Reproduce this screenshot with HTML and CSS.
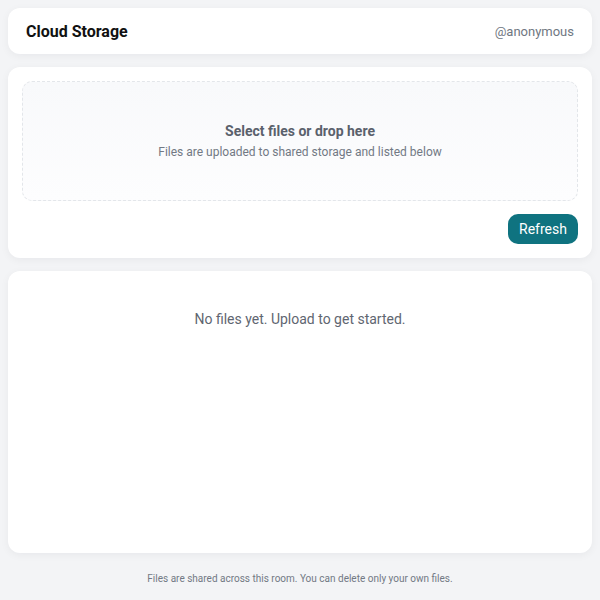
FILE: index.html
```html
<!DOCTYPE html>
<html lang="en">
<head>
  <meta charset="UTF-8" />
  <meta name="viewport" content="width=device-width, initial-scale=1" />
  <title>Cloud Storage</title>
  <link rel="stylesheet" href="styles.css">
</head>
<body>
  <div class="page">
    <div class="header card">
      <h1>Cloud Storage</h1>
      <span class="user">@anonymous</span>
    </div>

    <div class="upload card">
      <label class="dropzone">
        <input type="file" multiple />
        <div class="drop-title">Select files or drop here</div>
        <div class="drop-sub">Files are uploaded to shared storage and listed below</div>
      </label>
      <div class="actions">
        <button class="btn">Refresh</button>
      </div>
    </div>

    <div class="file-list card">
      <div class="empty">No files yet. Upload to get started.</div>
    </div>

    <div class="footer">Files are shared across this room. You can delete only your own files.</div>
  </div>
</body>
</html>
```

FILE: styles.css
```css
* {
  box-sizing: border-box;
}
html, body {
  height: 100%;
}
body {
  margin: 0;
  font-family: Roboto, "Liberation Sans", sans-serif;
  background: #f3f4f6;
  color: #111827;
}
.page {
  height: 100%;
  display: flex;
  flex-direction: column;
  gap: 13px;
  padding: 8px 8px 0;
}
.card {
  background: #fff;
  border-radius: 12px;
  box-shadow: 0 2px 8px rgba(17, 24, 39, 0.05);
}
.header {
  height: 46px;
  display: flex;
  align-items: center;
  justify-content: space-between;
  padding: 0 18px;
}
.header h1 {
  margin: 0;
  font-size: 16px;
  font-weight: 700;
  color: #111;
}
.user {
  font-size: 13px;
  color: #707782;
}
.upload {
  padding: 14px;
  display: flex;
  flex-direction: column;
  gap: 13px;
}
.dropzone {
  height: 120px;
  border: 1px dashed #e3e6ea;
  border-radius: 10px;
  background: linear-gradient(#f8f9fb, #fdfdfe);
  display: flex;
  flex-direction: column;
  align-items: center;
  justify-content: center;
  gap: 6px;
  cursor: pointer;
}
.dropzone input {
  display: none;
}
.drop-title {
  font-size: 14px;
  font-weight: 700;
  color: #5a616c;
}
.drop-sub {
  font-size: 12px;
  color: #727984;
}
.actions {
  display: flex;
  justify-content: flex-end;
}
.btn {
  height: 30px;
  width: 70px;
  border: none;
  border-radius: 10px;
  background: #0f7380;
  color: #fff;
  font-family: inherit;
  font-size: 14px;
  cursor: pointer;
}
.file-list {
  flex: 1;
  padding: 38px 14px;
}
.empty {
  text-align: center;
  font-size: 14px;
  line-height: 20px;
  color: #5f6671;
}
.footer {
  text-align: center;
  font-size: 10px;
  line-height: 16px;
  color: #727984;
  padding: 5px 0 13px;
}
```
